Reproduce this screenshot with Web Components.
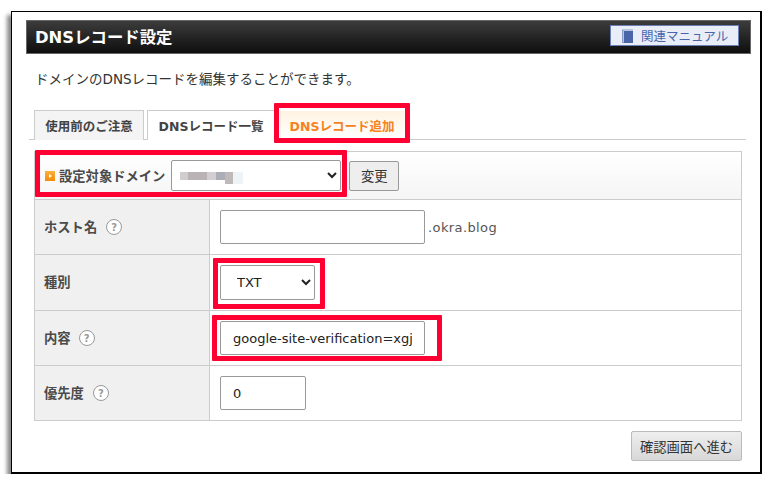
<!DOCTYPE html>
<html lang="ja">
<head>
<meta charset="utf-8">
<title>DNSレコード設定</title>
<style>
  html, body { margin: 0; background: #fff; }
  body { font-family: "DejaVu Sans", "Noto Sans CJK JP", sans-serif; color: #333; }
</style>
</head>
<body>
<dns-window>
  <dns-header slot="header" title-text="DNSレコード設定" link-text="関連マニュアル"></dns-header>
  <p slot="lead" style="margin:0">ドメインのDNSレコードを編集することができます。</p>
  <dns-tabs slot="tabs"></dns-tabs>
  <dns-form slot="form"></dns-form>
</dns-window>

<script>
(function () {
  const fonts = `"DejaVu Sans", "Noto Sans CJK JP", sans-serif`;

  class DnsWindow extends HTMLElement {
    constructor() {
      super();
      this.attachShadow({ mode: "open" }).innerHTML = `<style>
        :host {
          display: block;
          box-sizing: border-box;
          width: 751px;
          height: 463px;
          margin: 11px 0 0 11px;
          padding: 8px 9px 0 14px;
          border: 1px solid #000;
          border-width: 1px 2px 2px 1px;
          background: #fff;
          box-shadow: -4px 4px 4px #8a8a8a;
          font-family: ${fonts};
        }
        .lead {
          margin: 16px 0 0 9px;
          height: 18px;
          font-size: 13.5px;
          line-height: 18px;
          color: #333;
        }
        .tabs { margin: 22px 5px 0 3px; }
        .form { margin: 11px 0 0 8px; }
      </style>
      <slot name="header"></slot>
      <div class="lead"><slot name="lead"></slot></div>
      <div class="tabs"><slot name="tabs"></slot></div>
      <div class="form"><slot name="form"></slot></div>`;
    }
  }

  class DnsHeader extends HTMLElement {
    connectedCallback() {
      if (this.shadowRoot) return;
      this.attachShadow({ mode: "open" }).innerHTML = `<style>
        :host {
          display: flex;
          box-sizing: border-box;
          height: 34px;
          align-items: center;
          justify-content: space-between;
          padding: 0 11px 0 8px;
          border: 1px solid #666;
          background: linear-gradient(#3c3c3c, #0e0e0e);
        }
        h1 {
          margin: -2px 0 0;
          font-size: 16.4px;
          font-weight: 700;
          color: #fff;
        }
        a {
          display: flex;
          box-sizing: border-box;
          width: 129px;
          height: 21px;
          margin-top: -3px;
          align-items: center;
          gap: 8px;
          padding-left: 10px;
          border: 1px solid #6a7fb5;
          background: #e8edf8;
          font-size: 12.5px;
          color: #4a66a8;
        }
        svg { display: block; }
      </style>
      <h1>${this.getAttribute("title-text")}</h1>
      <a>
        <svg width="12" height="15" viewBox="0 0 12 15">
          <path d="M1 1.5 H12 V2.5 H2.5 V14 H12 V15 H1 Z" fill="#8a9cc6"/>
          <rect x="3" y="3" width="9" height="12" fill="#4a66a8"/>
        </svg>
        <span>${this.getAttribute("link-text")}</span>
      </a>`;
    }
  }

  class DnsTabs extends HTMLElement {
    constructor() {
      super();
      this.attachShadow({ mode: "open" }).innerHTML = `<style>
        :host {
          display: flex;
          position: relative;
          box-sizing: border-box;
          height: 30px;
          gap: 4px;
          padding-left: 5px;
          border-bottom: 1px solid #ccc;
          font-size: 12.5px;
          font-weight: 700;
          color: #444;
        }
        span {
          display: flex;
          box-sizing: border-box;
          height: 30px;
          align-items: center;
          justify-content: center;
          border: 1px solid #ccc;
          border-bottom: 0;
          background: #fff;
        }
        .a { width: 110px; margin-right: -1px; background: #f4f4f4; }
        .b { width: 128px; }
        .c {
          width: 128px;
          margin-left: -1px;
          border-color: #fff;
          background: linear-gradient(#fff3e2, #fff);
          color: #f5821f;
        }
        i {
          position: absolute;
          left: 245px;
          top: -7px;
          box-sizing: border-box;
          width: 136px;
          height: 40px;
          border: 5px solid #ff0033;
          border-radius: 1px;
        }
      </style>
      <span class="a">使用前のご注意</span>
      <span class="b">DNSレコード一覧</span>
      <span class="c">DNSレコード追加</span>
      <i></i>`;
    }
  }

  class DnsHelp extends HTMLElement {
    constructor() {
      super();
      this.attachShadow({ mode: "open" }).innerHTML = `<style>
        :host {
          display: inline-flex;
          box-sizing: border-box;
          width: 16px;
          height: 16px;
          align-items: center;
          justify-content: center;
          border: 1px solid #999;
          border-radius: 50%;
          background: #fff;
          font-size: 10px;
          font-weight: 700;
          color: #999;
        }
      </style>?`;
    }
  }

  class DnsRow extends HTMLElement {
    connectedCallback() {
      if (this.shadowRoot) return;
      const help = this.hasAttribute("help") ? "<dns-help></dns-help>" : "";
      this.attachShadow({ mode: "open" }).innerHTML = `<style>
        :host {
          display: grid;
          grid-template-columns: 175px 1fr;
          box-sizing: border-box;
          height: ${this.getAttribute("h") || 55}px;
          border-top: 1px solid #ccc;
        }
        .label {
          display: flex;
          align-items: center;
          gap: ${this.getAttribute("gap") || 9}px;
          padding-left: 9px;
          border-right: 1px solid #ccc;
          background: #f0f0f0;
          font-size: 13.3px;
          font-weight: 700;
          color: #4a4a4a;
        }
        .label span { margin-top: -2px; }
        .value {
          display: flex;
          position: relative;
          align-items: center;
          padding-left: 10px;
        }
      </style>
      <div class="label"><span>${this.getAttribute("label")}</span>${help}</div>
      <div class="value"><slot></slot></div>`;
    }
  }

  class DnsForm extends HTMLElement {
    constructor() {
      super();
      this.attachShadow({ mode: "open" }).innerHTML = `<style>
        :host {
          display: block;
          width: 708px;
          font-size: 13px;
        }
        .table { border: 1px solid #ccc; }
        .domain {
          display: flex;
          position: relative;
          box-sizing: border-box;
          height: 47px;
          align-items: center;
          padding-left: 10px;
          background: linear-gradient(#fff, #f5f5f5);
          font-size: 13.3px;
          font-weight: 700;
          color: #4a4a4a;
        }
        .mark {
          width: 10px;
          height: 10px;
          margin-right: 4px;
          background: linear-gradient(#fbb03b, #f58a0b);
          position: relative;
        }
        .mark::after {
          content: "";
          position: absolute;
          left: 4px;
          top: 3px;
          border-left: 3px solid #fff;
          border-top: 2px solid transparent;
          border-bottom: 2px solid transparent;
        }
        select, input {
          box-sizing: border-box;
          border: 1px solid #999;
          border-radius: 2px;
          background: #fff;
          font: 13px ${fonts};
          color: #222;
          outline: 0;
        }
        .domain select { width: 170px; height: 31px; margin-left: 6px; }
        .change {
          width: 50px;
          height: 30px;
          margin-left: 8px;
          border: 1px solid #999;
          border-radius: 2px;
          background: #eee;
          font: 13.3px ${fonts};
          color: #333;
          padding: 0;
        }
        .host { width: 205px; height: 34px; padding: 0 12px; }
        .suffix { margin-left: 3px; font-size: 13px; color: #555; letter-spacing: .4px; }
        .kind { width: 95px; height: 35px; padding-left: 12px; }
        .content { width: 205px; height: 34px; padding: 0 12px; }
        .priority { width: 86px; height: 34px; padding: 0 12px; }
        .blur { position: absolute; top: 20px; height: 8px; }
        .red {
          position: absolute;
          box-sizing: border-box;
          border: 5px solid #ff0033;
          border-radius: 1px;
        }
        .foot {
          display: flex;
          justify-content: flex-end;
          margin-top: 10px;
        }
        .next {
          width: 111px;
          height: 30px;
          padding: 0;
          border: 1px solid #bbb;
          border-radius: 2px;
          background: linear-gradient(#eee, #d8d8d8);
          font: 13.3px ${fonts};
          color: #333;
        }
      </style>
      <div class="table">
        <div class="domain">
          <span class="mark"></span>
          <span>設定対象ドメイン</span>
          <select aria-label="設定対象ドメイン"><option></option></select>
          <button class="change">変更</button>
          <span class="blur" style="left:145px;width:8px;background:#d0ccd0"></span>
          <span class="blur" style="left:153px;width:19px;background:#b9b3b6"></span>
          <span class="blur" style="left:172px;width:9px;background:#d2ced2"></span>
          <span class="blur" style="left:181px;width:9px;background:#adadb8"></span>
          <span class="blur" style="left:190px;width:8px;background:#c0b9b9;height:12px"></span>
          <span class="blur" style="left:198px;width:10px;background:#eef3f8;height:12px"></span>
          <span class="red" style="left:0;top:-2px;width:312px;height:47px"></span>
        </div>
        <dns-row label="ホスト名" help h="55">
          <input class="host"><span class="suffix">.okra.blog</span>
        </dns-row>
        <dns-row label="種別" h="56">
          <select class="kind"><option>TXT</option></select>
          <span class="red" style="left:3px;top:3px;width:112px;height:51px"></span>
        </dns-row>
        <dns-row label="内容" help gap="8" h="55">
          <input class="content" value="google-site-verification=xgj">
          <span class="red" style="left:2px;top:4px;width:230px;height:46px"></span>
        </dns-row>
        <dns-row label="優先度" help h="55">
          <input class="priority" value="0">
        </dns-row>
      </div>
      <div class="foot"><button class="next">確認画面へ進む</button></div>`;
    }
  }

  customElements.define("dns-window", DnsWindow);
  customElements.define("dns-header", DnsHeader);
  customElements.define("dns-tabs", DnsTabs);
  customElements.define("dns-help", DnsHelp);
  customElements.define("dns-row", DnsRow);
  customElements.define("dns-form", DnsForm);
})();
</script>
</body>
</html>
